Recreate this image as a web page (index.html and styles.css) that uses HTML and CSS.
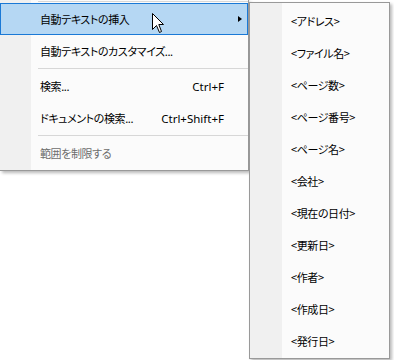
FILE: index.html
```html
<!DOCTYPE html>
<html lang="ja">
<head>
    <meta charset="UTF-8">
    <meta name="viewport" content="width=device-width, initial-scale=1.0">
    <title>自動テキストの挿入</title>
    <link rel="stylesheet" href="styles.css">
</head>
<body>
    <div class="stage">
        <div class="menu main-menu">
            <div class="sep"></div>
            <div class="item active">
                <span class="label">自動テキストの挿入</span>
                <span class="arrow"></span>
            </div>
            <div class="item"><span class="label">自動テキストのカスタマイズ...</span></div>
            <div class="sep"></div>
            <div class="item"><span class="label">検索...</span><span class="key">Ctrl+F</span></div>
            <div class="item"><span class="label">ドキュメントの検索...</span><span class="key">Ctrl+Shift+F</span></div>
            <div class="sep"></div>
            <div class="item disabled"><span class="label">範囲を制限する</span></div>
        </div>

        <div class="menu sub-menu">
            <div class="item"><span class="label">&lt;アドレス&gt;</span></div>
            <div class="item"><span class="label">&lt;ファイル名&gt;</span></div>
            <div class="item"><span class="label">&lt;ページ数&gt;</span></div>
            <div class="item"><span class="label">&lt;ページ番号&gt;</span></div>
            <div class="item"><span class="label">&lt;ページ名&gt;</span></div>
            <div class="item"><span class="label">&lt;会社&gt;</span></div>
            <div class="item"><span class="label">&lt;現在の日付&gt;</span></div>
            <div class="item"><span class="label">&lt;更新日&gt;</span></div>
            <div class="item"><span class="label">&lt;作者&gt;</span></div>
            <div class="item"><span class="label">&lt;作成日&gt;</span></div>
            <div class="item"><span class="label">&lt;発行日&gt;</span></div>
        </div>

        <svg class="cursor" width="13" height="21" viewBox="0 0 13 21">
            <path d="M0.5 0.5 L0.5 16.5 L4.5 12.5 L7.5 19.5 L9.5 18.5 L6.8 11.5 L11.5 11.5 Z" fill="#ffffff" stroke="#000000" stroke-width="1" stroke-linejoin="miter"/>
        </svg>
    </div>
</body>
</html>
```

FILE: styles.css
```css
body {
    margin: 0;
    background-color: #ffffff;
    font-family: "Noto Sans CJK JP", "Noto Sans", sans-serif;
    font-size: 12px;
    color: #000000;
}
.stage {
    position: relative;
    display: flex;
    align-items: flex-start;
    width: 394px;
    height: 360px;
    overflow: hidden;
}
.menu {
    box-sizing: border-box;
    background: linear-gradient(to right, #f0f0f0 31px, #fbfbfb 31px);
    border: 1px solid #999999;
    box-shadow: 2px 2px 3px rgba(0, 0, 0, 0.28);
}
.main-menu {
    width: 249px;
    border-top: none;
    border-left: none;
    padding-bottom: 1px;
}
.sub-menu {
    width: 141px;
    margin-top: 2px;
    padding: 2px 0 1px 0;
    background: linear-gradient(to right, #f0f0f0 32px, #fbfbfb 32px);
}
.item {
    box-sizing: border-box;
    display: flex;
    align-items: center;
    height: 32px;
    padding-left: 40px;
    padding-right: 24px;
    white-space: nowrap;
    font-feature-settings: "palt";
}
.sub-menu .item {
    padding-left: 41px;
}
.label {
    flex: 1;
    font-size: 11px;
    letter-spacing: -0.4px;
}
.key {
    font-family: "Noto Sans", sans-serif;
    font-size: 11.5px;
}
.item.active {
    background-color: #b5d7f3;
    border: 1px solid #1a79d6;
    padding-left: 39px;
    padding-right: 5px;
}
.arrow {
    width: 0;
    height: 0;
    border-top: 3.5px solid transparent;
    border-bottom: 3.5px solid transparent;
    border-left: 4px solid #000000;
}
.item.disabled {
    color: #6d6d6d;
}
.sep {
    height: 1px;
    margin: 1px 0 1px 38px;
    background-color: #d7d7d7;
}
.cursor {
    position: absolute;
    left: 152px;
    top: 13px;
}
```
